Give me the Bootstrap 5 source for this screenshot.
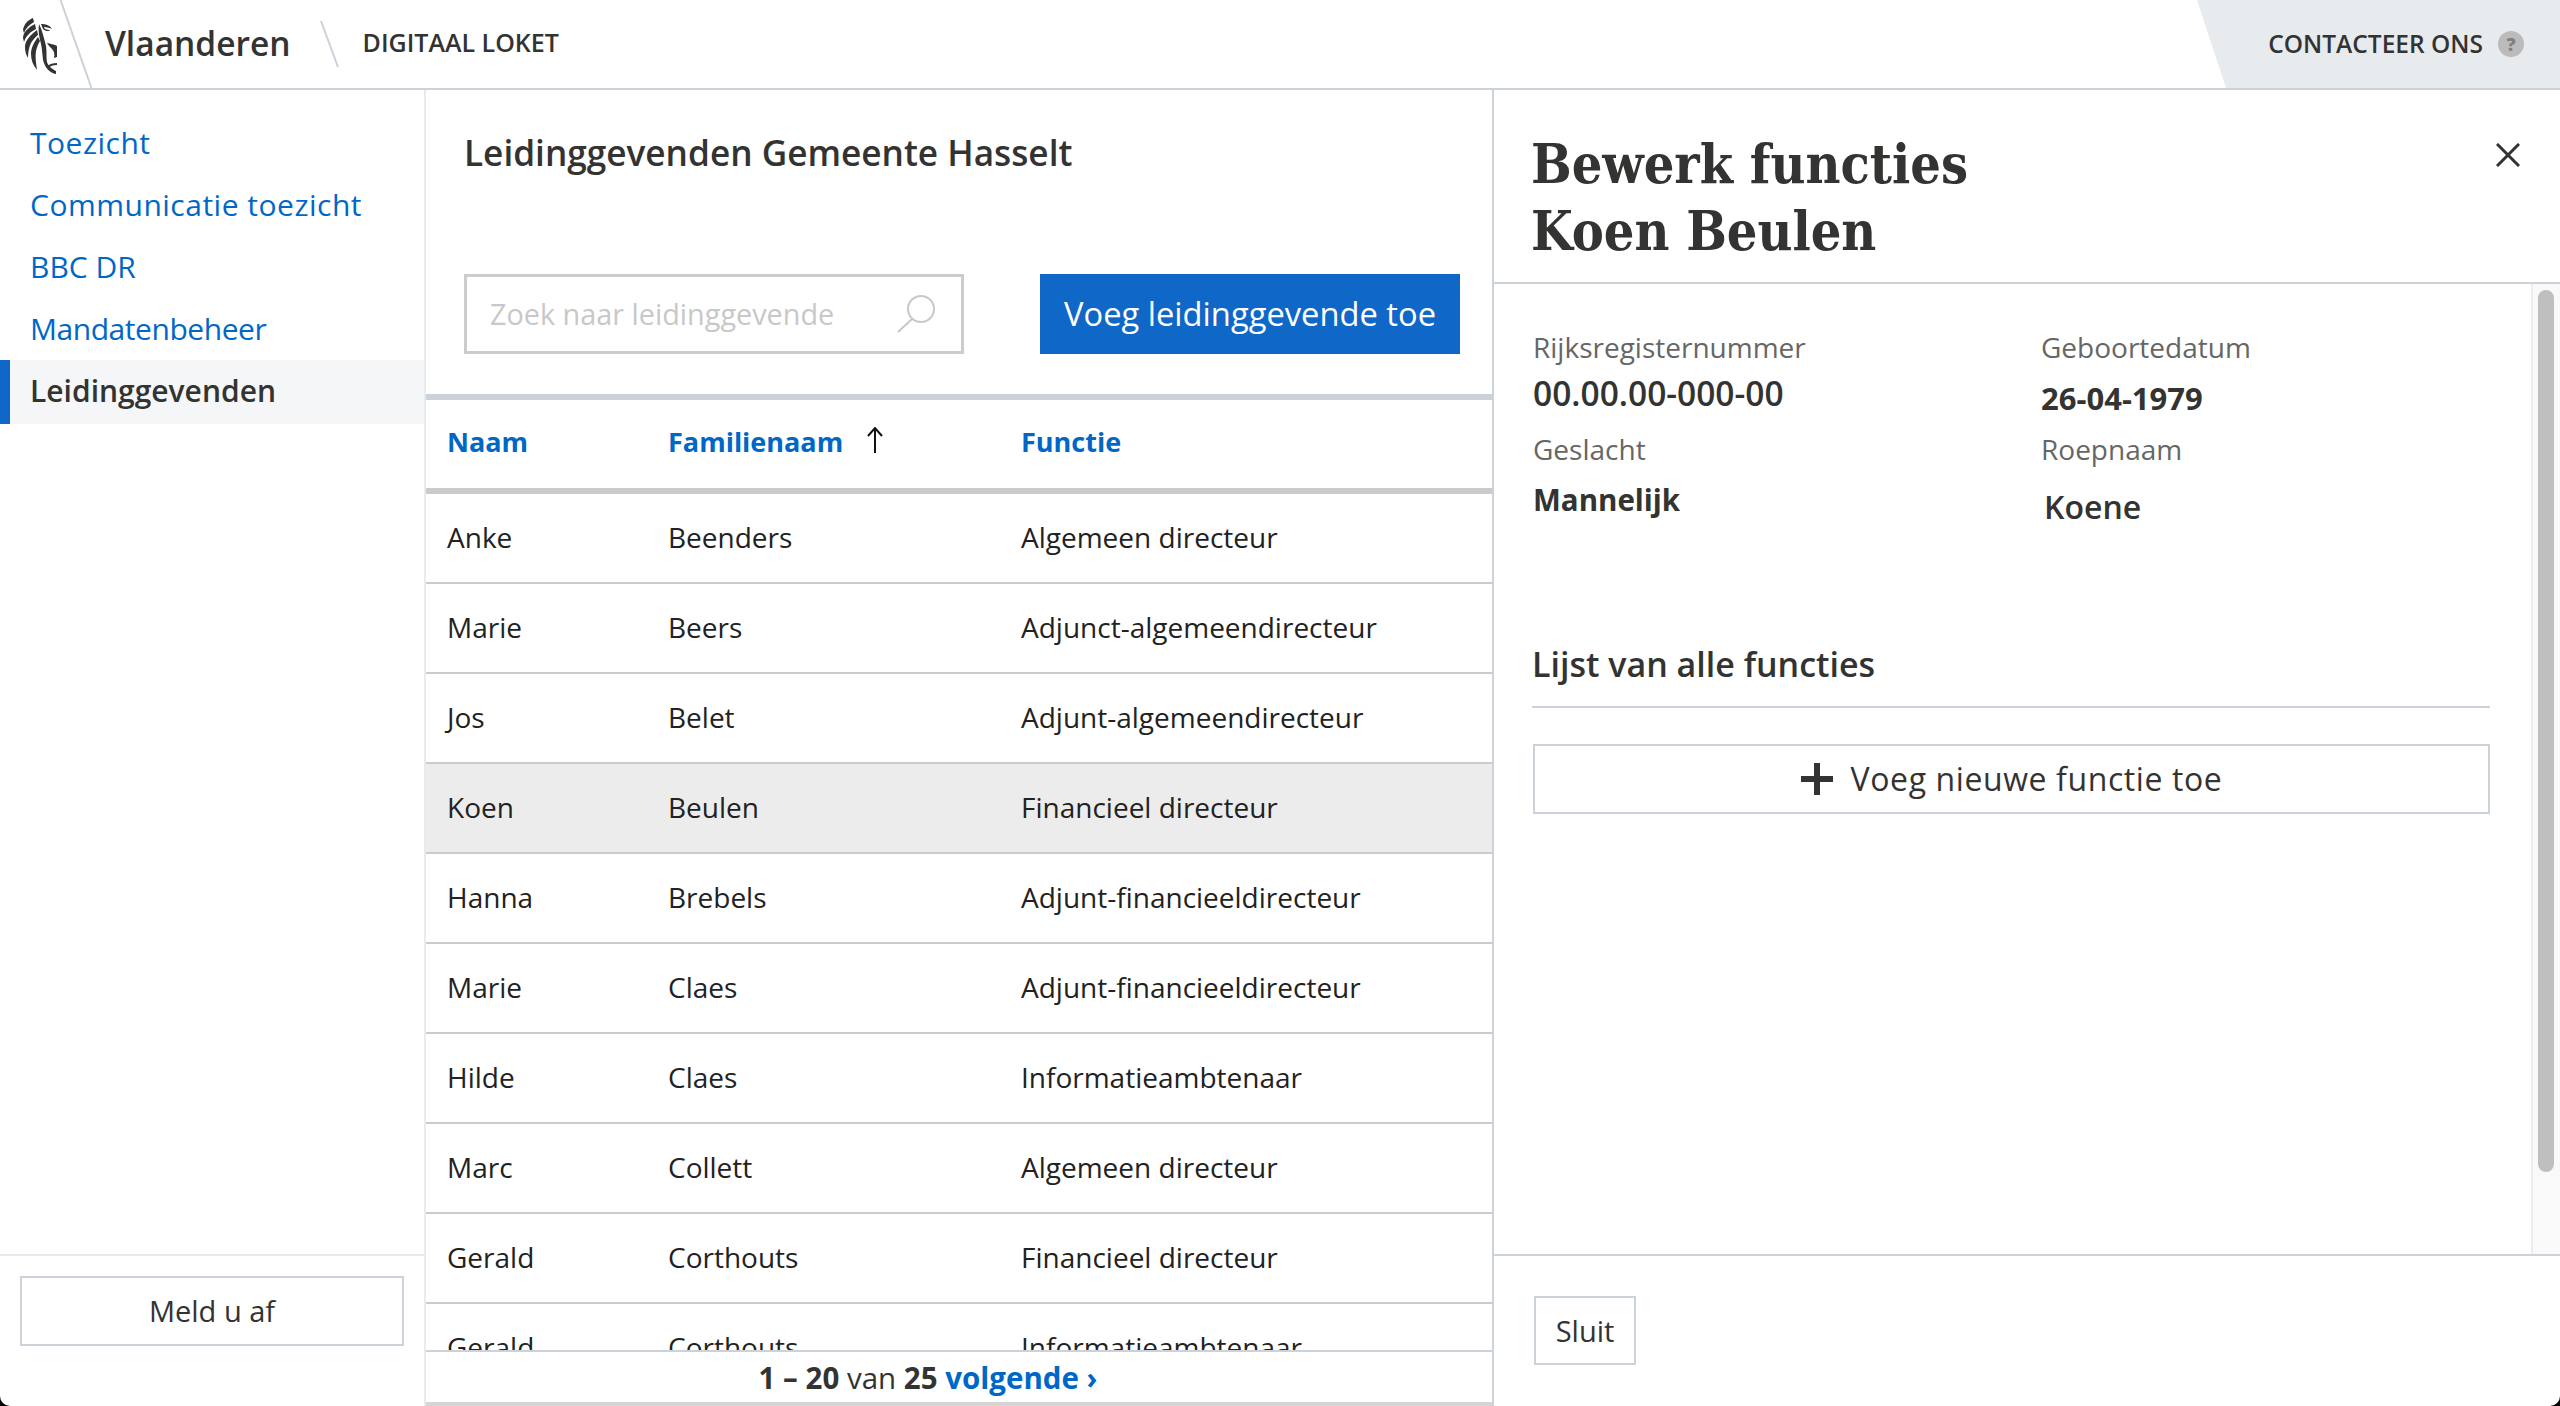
<!DOCTYPE html>
<html lang="nl">
<head>
    <meta charset="UTF-8">
    <meta name="viewport" content="width=device-width, initial-scale=1.0">
    <title>Leidinggevenden - Digitaal Loket</title>
    <link href="https://cdn.jsdelivr.net/npm/bootstrap@5.3.0/dist/css/bootstrap.min.css" rel="stylesheet">
    <style>
        html, body { height: 100%; }
        body {
            background: #000;
            color: #333332;
            font-family: "Open Sans", "Noto Sans", sans-serif;
            font-size: 28px;
            overflow: hidden;
        }
        .app-shell {
            height: 1406px;
            background: #fff;
            border-radius: 0 0 10px 10px;
            overflow: hidden;
        }

        /* top bar */
        .top-bar { height: 90px; border-bottom: 2px solid #cbd2da; }
        .brand-name { font-size: 33.5px; font-weight: 600; margin-left: 13px; position: relative; top: -1px; }
        .brand-slash { margin: 0 23px 0 29px; }
        .brand-sub { font-size: 25px; font-weight: 600; position: relative; top: -1px; }
        .contact-tab {
            width: 363px;
            background: #e8ebee;
            clip-path: polygon(0 0, 100% 0, 100% 100%, 29px 100%);
            padding-right: 36px;
            font-size: 24.500px;
            font-weight: 600;
            gap: 15px;
        }
        .help-dot {
            width: 26px; height: 26px;
            border-radius: 50%;
            background: #bbb;
            color: #808080;
            font-size: 18px;
            font-weight: 800;
            line-height: 26px;
            text-align: center;
        }

        /* left menu */
        .side-menu { width: 426px; border-right: 2px solid #e8ebee; }
        .side-menu .nav { padding-top: 22px; }
        .side-link {
            display: block;
            height: 62px;
            line-height: 62px;
            padding: 0 0 0 30px;
            font-size: 30px;
            color: #0067c7;
            text-decoration: none;
        }
        .side-link.wide-link { letter-spacing: .5px; }
        .side-link.tight-link { letter-spacing: -.45px; }
        .side-link.current {
            height: 64px;
            line-height: 62px;
            background: #f5f6f8;
            border-left: 10px solid #0f67c8;
            padding-left: 20px;
            color: #333332;
            font-weight: 600;
        }
        .side-foot { border-top: 2px solid #e8ebee; padding: 20px 20px 60px; height: 152px; }

        .line-btn {
            background: #fff;
            border: 2px solid #cbd2da;
            border-radius: 0;
            color: #333332;
            font-size: 29px;
        }
        .line-btn:hover { background: #f5f6f8; color: #333332; border-color: #cbd2da; }
        .logout-btn { height: 70px; width: 384px; }

        /* middle list */
        .list-pane { width: 1068px; border-right: 2px solid #cbd2da; }
        .list-title { font-size: 35.2px; font-weight: 600; padding: 37px 0 0 38px; height: 184px; margin: 0; line-height: 50px; }
        .search-row { padding: 0 32px 0 38px; height: 120px; }
        .search-field { width: 500px; height: 80px; }
        .search-field .form-control {
            height: 80px;
            border: 3px solid #ccc;
            border-radius: 0;
            font-size: 28.800px;
            padding: 0 70px 2px 23px;
        }
        .search-field .form-control::placeholder { color: #c8c8c8; }
        .search-glyph { top: 21px; right: 29px; }
        .add-btn {
            width: 420px; height: 80px;
            background: #0f67c8;
            border: 0;
            border-radius: 0;
            color: #fff;
            font-size: 32.700px;
        }
        .add-btn:hover { background: #0d5cb3; color: #fff; }

        .table-wrap { flex: 1 1 0; min-height: 0; overflow: hidden; }
        .lead-table { table-layout: fixed; margin: 0; width: 100%; border-collapse: separate; border-spacing: 0; font-size: 28px; color: #222; }
        .lead-table > :not(caption) > * > * {
            height: 90px;
            padding: 0 0 3px 21px;
            vertical-align: middle;
            border-bottom: 2px solid #cbcbcb;
            box-shadow: none;
            color: inherit;
            background: transparent;
        }
        .lead-table thead th {
            height: 100px;
            border-top: 6px solid #cbd2da;
            border-bottom: 6px solid #cbcbcb;
            font-weight: 700;
            font-size: 27px;
        }
        .lead-table thead a { color: #0067c7; text-decoration: none; }
        .lead-table tr.picked td { background: #ececec; }
        .col-naam { width: 221px; }
        .col-fam { width: 353px; }
        .sort-arrow { margin-left: 23px; vertical-align: -1px; }
        .pager {
            height: 56px;
            border-top: 2px solid #cbd2da;
            border-bottom: 4px solid #d5d5d5;
            line-height: 52px;
            font-size: 29.500px;
            text-align: center;
            padding-right: 62px;
        }
        .pager a { color: #0067c7; text-decoration: none; font-weight: 700; }

        /* right edit pane */
        .edit-head { height: 194px; border-bottom: 2px solid #cbd2da; padding: 41px 40px 0 37px; }
        .edit-title {
            font-family: "DejaVu Serif Condensed", "DejaVu Serif", serif;
            font-weight: 700;
            font-size: 53.500px;
            line-height: 67px;
            margin: 0;
        }
        .close-x { margin-top: 12px; background: none; border: 0; padding: 0; line-height: 0; }
        .edit-body { flex: 1 1 0; min-height: 0; }
        .edit-scroll { flex: 1 1 0; padding: 0 41px 0 39px; }
        .fake-track { width: 29px; background: #f9f9f9; border-left: 2px solid #ececec; padding: 6px 6px 0 5px; }
        .fake-thumb { height: 882px; background: #bfbfbf; border-radius: 8px; }
        .info-grid { height: 296px; margin-top: 4px; padding-top: 39px; }
        .info-col-a { width: 508px; }
        .field-key { color: #666; line-height: 40px; font-size: 28px; }
        .field-val { font-weight: 700; line-height: 40px; font-size: 31px; }
        .field-id { font-size: 33.5px; font-weight: 600; }
        .field-sex { font-size: 29.5px; }
        .field-nick { font-size: 32px; font-weight: 600; margin-left: 3px; }
        .section-head { font-size: 34px; font-weight: 600; border-bottom: 2px solid #cbd2da; height: 83px; line-height: 44px; padding-top: 17px; margin-top: 41px; margin-left: -1px; }
        .new-func { height: 70px; width: 100%; margin-top: 36px; letter-spacing: .6px; font-size: 32px; }
        .new-func svg { margin-right: 18px; vertical-align: -4px; }
        .edit-foot { height: 152px; border-top: 2px solid #cbd2da; padding: 40px 0 0 40px; }
        .close-btn { width: 102px; height: 69px; padding: 0; }
    </style>
</head>
<body>
    <div class="app-shell d-flex flex-column">
        <!-- top bar -->
        <header class="top-bar d-flex align-items-center flex-shrink-0">
            <svg width="92" height="88" viewBox="0 0 92 88" class="flex-shrink-0">
                <g fill="#333332">
                    <path d="M33 18C28 20 24 24 23 30L24 33C26 28 29 25 34 22Z"/>
                    <path d="M35 24C29 27 23 32 23 38L24 42C26 36 30 32 36 29Z"/>
                    <path d="M37 30C30 35 25 41 25 47C25 51 26 55 28 58C28 52 29 47 31 43C33 40 35 37 38 35Z"/>
                    <path d="M38 37C34 42 31 48 31 54C31 60 33 65 37 70C36 63 35 57 36 51C37 47 38 44 40 41Z"/>
                    <path d="M39 24C42 30 44 38 46 46C47 52 46 58 47 62C48 66 52 69 56 71L56 74C50 73 45 68 43 60C42 52 42 46 40 40C39 35 38 30 39 24Z"/>
                    <path d="M41 24C45 24 50 25 52 29C50 28 47 27 44 27C44 29 47 30 50 30C49 32 45 31 43 29Z"/>
                    <path d="M47 43C50 44 54 44 57 46L57 57L54 58C55 54 54 51 52 49C50 47 48 45 47 43Z"/>
                    <path d="M47 66C50 64 53 63 57 63L57 65C53 65 50 66 49 68Z"/>
                </g>
                <path d="M60.500 0L91.500 88" stroke="#cbd2da" stroke-width="2" fill="none"/>
            </svg>
            <span class="brand-name">Vlaanderen</span>
            <svg class="brand-slash" width="20" height="48" viewBox="0 0 20 48"><path d="M1 1L18 47" stroke="#cbd2da" stroke-width="2" fill="none"/></svg>
            <span class="brand-sub">DIGITAAL LOKET</span>
            <a class="contact-tab ms-auto h-100 d-flex align-items-center justify-content-end text-decoration-none" href="#" style="color:#333332">
                CONTACTEER ONS
                <span class="help-dot">?</span>
            </a>
        </header>

        <div class="d-flex flex-grow-1" style="min-height:0">
            <!-- left menu -->
            <aside class="side-menu d-flex flex-column flex-shrink-0">
                <nav class="nav flex-column flex-grow-1">
                    <a class="side-link wide-link" href="#">Toezicht</a>
                    <a class="side-link wide-link" href="#">Communicatie toezicht</a>
                    <a class="side-link" href="#">BBC DR</a>
                    <a class="side-link tight-link" href="#">Mandatenbeheer</a>
                    <a class="side-link current" href="#">Leidinggevenden</a>
                </nav>
                <div class="side-foot">
                    <button class="btn line-btn logout-btn" type="button">Meld u af</button>
                </div>
            </aside>

            <!-- list -->
            <main class="list-pane d-flex flex-column flex-shrink-0">
                <h1 class="list-title">Leidinggevenden Gemeente Hasselt</h1>
                <div class="search-row d-flex justify-content-between align-items-start">
                    <div class="search-field position-relative">
                        <input class="form-control" type="text" placeholder="Zoek naar leidinggevende">
                        <svg class="search-glyph position-absolute" width="38" height="38" viewBox="0 0 38 38" fill="none" stroke="#c8c8c8" stroke-width="2"><circle cx="24" cy="14" r="13"/><path d="M15 24L1 37"/></svg>
                    </div>
                    <button class="btn add-btn" type="button">Voeg leidinggevende toe</button>
                </div>
                <div class="table-wrap">
                    <table class="table lead-table">
                        <thead>
                            <tr>
                                <th class="col-naam"><a href="#">Naam</a></th>
                                <th class="col-fam"><a href="#">Familienaam</a><svg class="sort-arrow" width="18" height="26" viewBox="0 0 18 26" fill="none" stroke="#111" stroke-width="2"><path d="M9 26V1M2 9L9 1L16 9"/></svg></th>
                                <th><a href="#">Functie</a></th>
                            </tr>
                        </thead>
                        <tbody>
                            <tr><td>Anke</td><td>Beenders</td><td>Algemeen directeur</td></tr>
                            <tr><td>Marie</td><td>Beers</td><td>Adjunct-algemeendirecteur</td></tr>
                            <tr><td>Jos</td><td>Belet</td><td>Adjunt-algemeendirecteur</td></tr>
                            <tr class="picked"><td>Koen</td><td>Beulen</td><td>Financieel directeur</td></tr>
                            <tr><td>Hanna</td><td>Brebels</td><td>Adjunt-financieeldirecteur</td></tr>
                            <tr><td>Marie</td><td>Claes</td><td>Adjunt-financieeldirecteur</td></tr>
                            <tr><td>Hilde</td><td>Claes</td><td>Informatieambtenaar</td></tr>
                            <tr><td>Marc</td><td>Collett</td><td>Algemeen directeur</td></tr>
                            <tr><td>Gerald</td><td>Corthouts</td><td>Financieel directeur</td></tr>
                            <tr><td>Gerald</td><td>Corthouts</td><td>Informatieambtenaar</td></tr>
                        </tbody>
                    </table>
                </div>
                <div class="pager"><b>1 – 20</b> van <b>25</b> <a href="#">volgende ›</a></div>
            </main>

            <!-- edit pane -->
            <section class="d-flex flex-column flex-grow-1" style="min-width:0">
                <div class="edit-head d-flex justify-content-between align-items-start flex-shrink-0">
                    <h2 class="edit-title">Bewerk functies<br>Koen Beulen</h2>
                    <button class="close-x" type="button" aria-label="Sluit">
                        <svg width="24" height="24" viewBox="0 0 24 24" stroke="#333332" stroke-width="3" fill="none"><path d="M1 1L23 23M23 1L1 23"/></svg>
                    </button>
                </div>
                <div class="edit-body d-flex">
                    <div class="edit-scroll">
                        <div class="info-grid d-flex">
                            <div class="info-col-a">
                                <div class="field-key">Rijksregisternummer</div>
                                <div class="field-val field-id" style="margin-top:6px">00.00.00-000-00</div>
                                <div class="field-key" style="margin-top:16px">Geslacht</div>
                                <div class="field-val field-sex" style="margin-top:11px">Mannelijk</div>
                            </div>
                            <div>
                                <div class="field-key">Geboortedatum</div>
                                <div class="field-val" style="margin-top:11px">26-04-1979</div>
                                <div class="field-key" style="margin-top:11px">Roepnaam</div>
                                <div class="field-val field-nick" style="margin-top:18px">Koene</div>
                            </div>
                        </div>
                        <div class="section-head">Lijst van alle functies</div>
                        <button class="btn line-btn new-func" type="button">
                            <svg width="32" height="32" viewBox="0 0 32 32" fill="#333332"><path d="M13 0h6v13h13v6H19v13h-6V19H0v-6h13z"/></svg>Voeg nieuwe functie toe
                        </button>
                    </div>
                    <div class="fake-track flex-shrink-0"><div class="fake-thumb"></div></div>
                </div>
                <div class="edit-foot flex-shrink-0">
                    <button class="btn line-btn close-btn" type="button">Sluit</button>
                </div>
            </section>
        </div>
    </div>

    <script src="https://cdn.jsdelivr.net/npm/bootstrap@5.3.0/dist/js/bootstrap.bundle.min.js"></script>
</body>
</html>
